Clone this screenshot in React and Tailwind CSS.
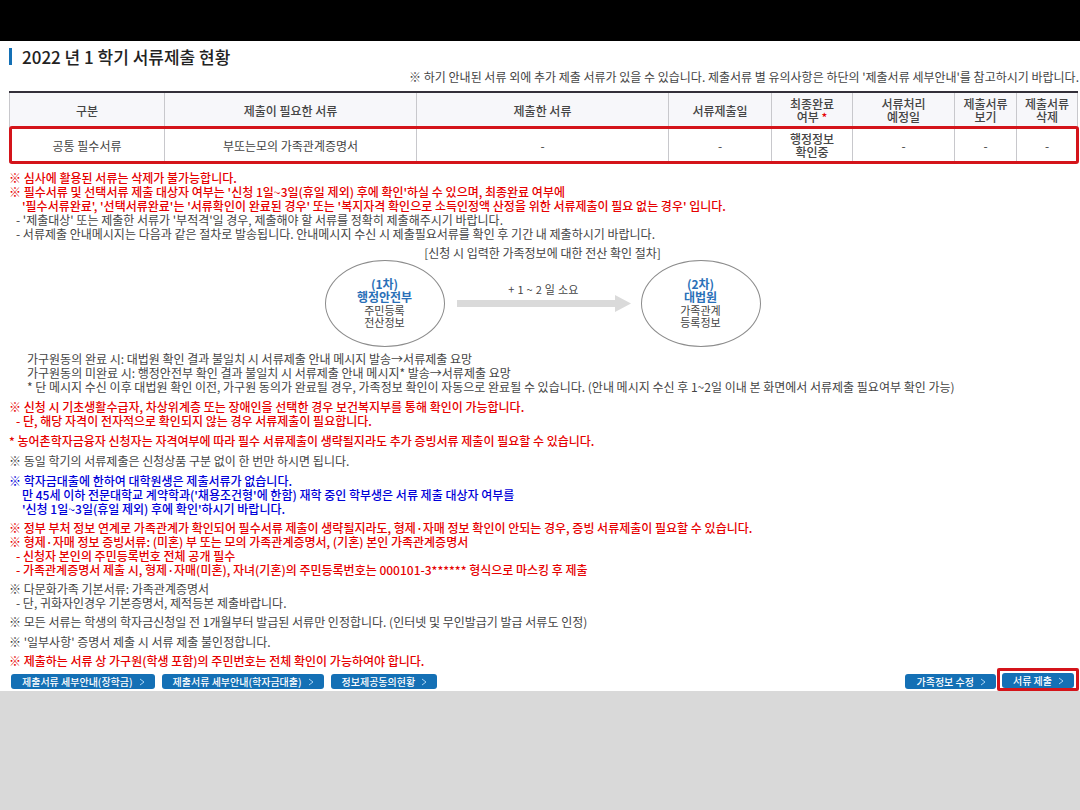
import clsx from 'clsx'

const COLUMNS = [
  { width: 'w-[155px]', label: ['구분'], value: ['공통 필수서류'] },
  { width: 'w-[252px]', label: ['제출이 필요한 서류'], value: ['부또는모의 가족관계증명서'] },
  { width: 'w-[252px]', label: ['제출한 서류'], value: ['-'] },
  { width: 'w-[103px]', label: ['서류제출일'], value: ['-'] },
  { width: 'w-[81px]', label: ['최종완료', '여부'], required: true, value: ['행정정보', '확인중'], strong: true },
  { width: 'w-[102px]', label: ['서류처리', '예정일'], value: ['-'] },
  { width: 'w-[62px]', label: ['제출서류', '보기'], value: ['-'] },
  { width: 'w-[61px]', label: ['제출서류', '삭제'], value: ['-'] }
]

const TONES = {
  gray: 'text-[#444444]',
  red: 'text-[#e60000] font-medium',
  blue: 'text-[#0000d8] font-medium'
}

const INDENTS = {
  none: '',
  dash: 'pl-[7px]',
  text: 'pl-[13px]',
  deep: 'pl-[18px]'
}

const TOP_NOTES = [
  { tone: 'red', text: '※ 심사에 활용된 서류는 삭제가 불가능합니다.' },
  { tone: 'red', text: "※ 필수서류 및 선택서류 제출 대상자 여부는 '신청 1일~3일(휴일 제외) 후에 확인'하실 수 있으며, 최종완료 여부에" },
  {
    tone: 'red',
    indent: 'text',
    text: "'필수서류완료', '선택서류완료'는 '서류확인이 완료된 경우' 또는 '복지자격 확인으로 소득인정액 산정을 위한 서류제출이 필요 없는 경우' 입니다."
  },
  { tone: 'gray', indent: 'dash', text: "- '제출대상' 또는 제출한 서류가 '부적격'일 경우, 제출해야 할 서류를 정확히 제출해주시기 바랍니다." },
  {
    tone: 'gray',
    indent: 'dash',
    text: '- 서류제출 안내메시지는 다음과 같은 절차로 발송됩니다. 안내메시지 수신 시 제출필요서류를 확인 후 기간 내 제출하시기 바랍니다.'
  }
]

const NOTE_GROUPS = [
  {
    gap: 'mt-[5px]',
    lines: [
      { tone: 'gray', indent: 'deep', text: '가구원동의 완료 시: 대법원 확인 결과 불일치 시 서류제출 안내 메시지 발송→서류제출 요망' },
      { tone: 'gray', indent: 'deep', text: '가구원동의 미완료 시: 행정안전부 확인 결과 불일치 시 서류제출 안내 메시지* 발송→서류제출 요망' },
      {
        tone: 'gray',
        indent: 'deep',
        text: '* 단 메시지 수신 이후 대법원 확인 이전, 가구원 동의가 완료될 경우, 가족정보 확인이 자동으로 완료될 수 있습니다. (안내 메시지 수신 후 1~2일 이내 본 화면에서 서류제출 필요여부 확인 가능)'
      }
    ]
  },
  {
    gap: 'mt-1.5',
    lines: [
      { tone: 'red', text: '※ 신청 시 기초생활수급자, 차상위계층 또는 장애인을 선택한 경우 보건복지부를 통해 확인이 가능합니다.' },
      { tone: 'red', indent: 'dash', text: '- 단, 해당 자격이 전자적으로 확인되지 않는 경우 서류제출이 필요합니다.' }
    ]
  },
  {
    gap: 'mt-1.5',
    lines: [
      { tone: 'red', text: '* 농어촌학자금융자 신청자는 자격여부에 따라 필수 서류제출이 생략될지라도 추가 증빙서류 제출이 필요할 수 있습니다.' }
    ]
  },
  {
    gap: 'mt-1.5',
    lines: [{ tone: 'gray', text: '※ 동일 학기의 서류제출은 신청상품 구분 없이 한 번만 하시면 됩니다.' }]
  },
  {
    gap: 'mt-1.5',
    lines: [
      { tone: 'blue', text: '※ 학자금대출에 한하여 대학원생은 제출서류가 없습니다.' },
      { tone: 'blue', indent: 'text', text: "만 45세 이하 전문대학교 계약학과('채용조건형'에 한함) 재학 중인 학부생은 서류 제출 대상자 여부를" },
      { tone: 'blue', indent: 'text', text: "'신청 1일~3일(휴일 제외) 후에 확인'하시기 바랍니다." }
    ]
  },
  {
    gap: 'mt-[5px]',
    lines: [
      {
        tone: 'red',
        text: '※ 정부 부처 정보 연계로 가족관계가 확인되어 필수서류 제출이 생략될지라도, 형제·자매 정보 확인이 안되는 경우, 증빙 서류제출이 필요할 수 있습니다.'
      },
      { tone: 'red', text: '※ 형제·자매 정보 증빙서류: (미혼) 부 또는 모의 가족관계증명서, (기혼) 본인 가족관계증명서' },
      { tone: 'red', indent: 'dash', text: '- 신청자 본인의 주민등록번호 전체 공개 필수' },
      { tone: 'red', indent: 'dash', text: '- 가족관계증명서 제출 시, 형제·자매(미혼), 자녀(기혼)의 주민등록번호는 000101-3****** 형식으로 마스킹 후 제출' }
    ]
  },
  {
    gap: 'mt-[5px]',
    lines: [
      { tone: 'gray', text: '※ 다문화가족 기본서류: 가족관계증명서' },
      { tone: 'gray', indent: 'dash', text: '- 단, 귀화자인경우 기본증명서, 제적등본 제출바랍니다.' }
    ]
  },
  {
    gap: 'mt-[5px]',
    lines: [
      { tone: 'gray', text: '※ 모든 서류는 학생의 학자금신청일 전 1개월부터 발급된 서류만 인정합니다. (인터넷 및 무인발급기 발급 서류도 인정)' }
    ]
  },
  {
    gap: 'mt-1.5',
    lines: [{ tone: 'gray', text: "※ '일부사항' 증명서 제출 시 서류 제출 불인정합니다." }]
  },
  {
    gap: 'mt-[5px]',
    lines: [{ tone: 'red', text: '※ 제출하는 서류 상 가구원(학생 포함)의 주민번호는 전체 확인이 가능하여야 합니다.' }]
  }
]

function Stacked({ lines }) {
  return lines.map((line) => (
    <span key={line} className="block">
      {line}
    </span>
  ))
}

function Note({ tone, indent = 'none', text }) {
  return <p className={clsx('whitespace-nowrap', TONES[tone], INDENTS[indent])}>{text}</p>
}

function StatusTable() {
  return (
    <table className="w-full table-fixed border-collapse text-center text-[#444444]">
      <colgroup>
        {COLUMNS.map((col, idx) => (
          <col key={idx} className={col.width} />
        ))}
      </colgroup>
      <thead>
        <tr className="h-[35px] border-t-2 border-[#33303a] bg-[#f7f7fa]">
          {COLUMNS.map((col, idx) => (
            <th key={idx} scope="col" className="border-x border-[#c8c8cc] p-0 font-medium leading-[13px]">
              {col.required ? (
                <>
                  <span className="block">{col.label[0]}</span>
                  <span className="block">
                    {col.label[1]} <span className="text-[#e60000]">*</span>
                  </span>
                </>
              ) : (
                <Stacked lines={col.label} />
              )}
            </th>
          ))}
        </tr>
      </thead>
      <tbody>
        <tr className="h-[36px] rounded-xs outline-3 -outline-offset-2 outline-[#d4141a]">
          {COLUMNS.map((col, idx) => (
            <td
              key={idx}
              className={clsx('border-x border-[#c8c8cc] p-0 leading-[13px]', col.strong && 'font-medium')}
            >
              <Stacked lines={col.value} />
            </td>
          ))}
        </tr>
      </tbody>
    </table>
  )
}

function Agency({ order, name, lines }) {
  return (
    <div className="flex h-[87px] w-[120px] flex-col items-center justify-center rounded-[50%] border border-[#8c8c8c] pb-0.5 leading-[13px]">
      <strong className="font-bold text-[#2a70b8]">{order}</strong>
      <strong className="font-bold text-[#2a70b8]">{name}</strong>
      <div className="mt-px text-center text-[11px] leading-3">
        <Stacked lines={lines} />
      </div>
    </div>
  )
}

function Procedure() {
  return (
    <section className="mt-[5px] text-[#444444]">
      <h2 className="text-center">[신청 시 입력한 가족정보에 대한 전산 확인 절차]</h2>
      <div className="flex items-center justify-center">
        <Agency order="(1차)" name="행정안전부" lines={['주민등록', '전산정보']} />
        <div className="mr-2.5 ml-3 flex flex-col items-center pb-3">
          <span className="text-[11px] leading-3 tracking-wide">+ 1 ~ 2 일 소요</span>
          <svg width="174" height="17" viewBox="0 0 174 17" aria-hidden="true">
            <path d="M0 5h158V0l16 8.5L158 17v-5H0z" fill="#dadada" />
          </svg>
        </div>
        <Agency order="(2차)" name="대법원" lines={['가족관계', '등록정보']} />
      </div>
    </section>
  )
}

function ActionButton({ children }) {
  return (
    <button
      type="button"
      className="flex h-[15px] items-center gap-1.5 rounded-[3px] bg-[#1470b5] pr-2.5 pl-[11px] text-[10px] leading-3 font-medium whitespace-nowrap text-white"
    >
      {children}
      <svg width="6" height="8" viewBox="0 0 6 8" fill="none" stroke="#a9d4f5" aria-hidden="true">
        <path d="M1 1l4 3-4 3" />
      </svg>
    </button>
  )
}

function App() {
  return (
    <div className="min-h-screen overflow-x-hidden bg-[#d9d9d9] font-['Noto_Sans_CJK_KR',sans-serif] text-[12px] leading-[14px]">
      <div className="h-[41px] bg-black" />
      <main className="bg-white">
        <div className="pt-[7px] pr-1 pl-[9px]">
          <h1 className="flex h-[17px] items-center border-l-3 border-[#1470b5] pl-2.5 text-[17px] leading-4 font-medium text-[#222222]">
            2022 년 1 학기 서류제출 현황
          </h1>
          <p className="-mr-[3px] mt-[5px] mb-[7px] text-right text-[#444444]">
            ※ 하기 안내된 서류 외에 추가 제출 서류가 있을 수 있습니다. 제출서류 별 유의사항은 하단의 '제출서류 세부안내'를
            참고하시기 바랍니다.
          </p>
          <StatusTable />
          <div className="mt-2">
            {TOP_NOTES.map((line) => (
              <Note key={line.text} {...line} />
            ))}
          </div>
          <Procedure />
          {NOTE_GROUPS.map((group, idx) => (
            <div key={idx} className={group.gap}>
              {group.lines.map((line) => (
                <Note key={line.text} {...line} />
              ))}
            </div>
          ))}
        </div>
        <div className="flex items-end justify-between pr-px pl-[11px]">
          <div className="flex gap-[7px] pb-0.5">
            <ActionButton>제출서류 세부안내(장학금)</ActionButton>
            <ActionButton>제출서류 세부안내(학자금대출)</ActionButton>
            <ActionButton>정보제공동의현황</ActionButton>
          </div>
          <div className="flex items-end gap-px">
            <div className="pb-0.5">
              <ActionButton>가족정보 수정</ActionButton>
            </div>
            <div className="rounded-xs border-3 border-[#d4141a] px-0.5 pt-0.5">
              <ActionButton>서류 제출</ActionButton>
            </div>
          </div>
        </div>
      </main>
    </div>
  )
}

export default App
